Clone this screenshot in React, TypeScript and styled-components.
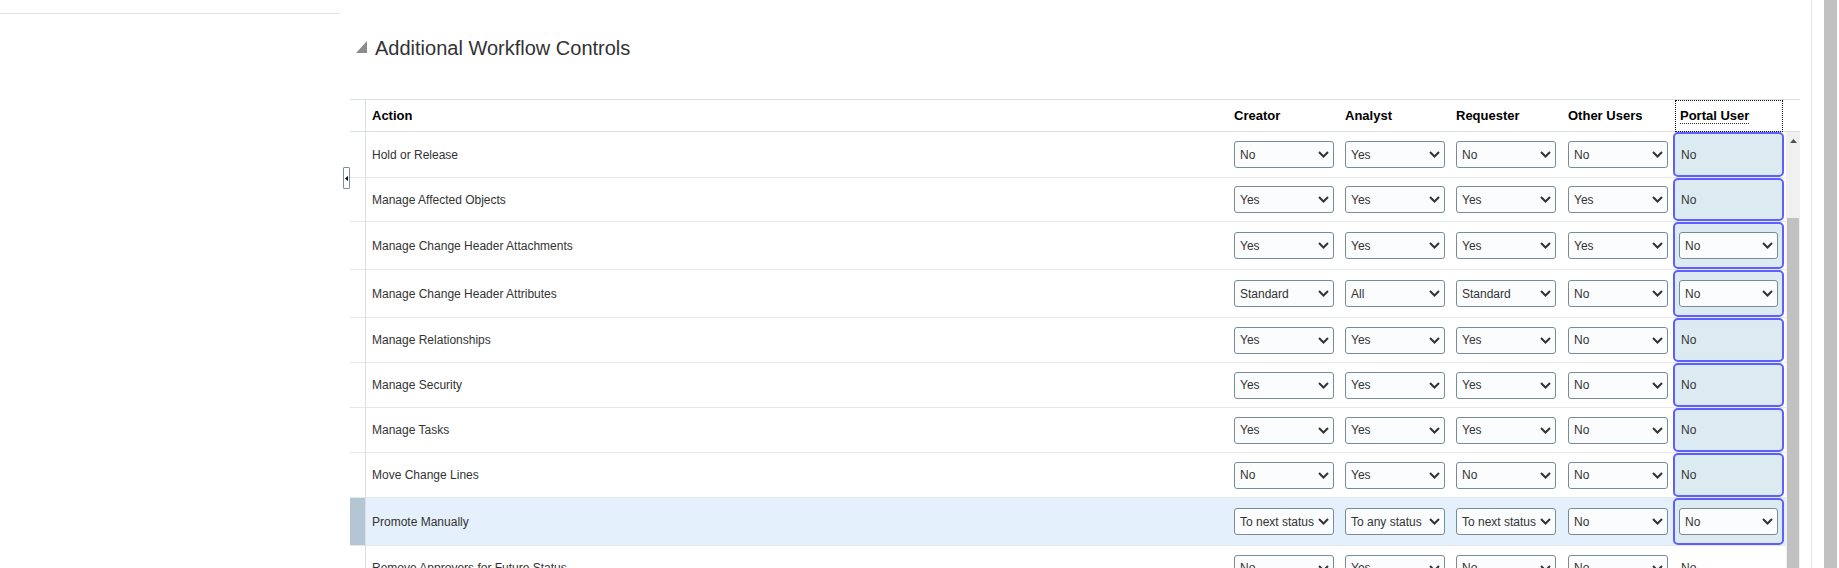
import React from "react";
import styled, { createGlobalStyle } from "styled-components";

const GlobalStyle = createGlobalStyle`
  html, body { margin: 0; padding: 0; background: #fff; }
  body { font-family: "Liberation Sans", Arial, sans-serif; }
  * { box-sizing: border-box; }
`;

const COLS = "16px 862px 111px 111px 112px 111px 113px";

const Page = styled.div`
  display: flex;
  width: 1839px;
  height: 568px;
  overflow: hidden;
  background: #fff;
`;

const LeftPanel = styled.aside`
  width: 340px;
  flex: none;
`;

const LeftHeader = styled.div`
  height: 14px;
  border-bottom: 1px solid #dde3e9;
`;

const Splitter = styled.div`
  width: 10px;
  flex: none;
  position: relative;
`;

const Handle = styled.button`
  position: absolute;
  top: 167px;
  left: 3px;
  width: 7px;
  height: 22px;
  padding: 0;
  border: 1px solid #7690a8;
  border-radius: 1px;
  background: #fff;
  display: flex;
  align-items: center;
  justify-content: center;
  cursor: pointer;
`;

const Main = styled.main`
  width: 1450px;
  flex: none;
  display: flex;
  flex-direction: column;
`;

const TitleRow = styled.div`
  margin-top: 37px;
  height: 23px;
  display: flex;
  align-items: flex-start;
  gap: 8px;
  padding-left: 6px;
`;

const Disclosure = styled.svg`
  margin-top: 4px;
  flex: none;
`;

const TitleText = styled.h2`
  margin: 0;
  font-size: 20px;
  line-height: 23px;
  font-weight: normal;
  color: #333;
  white-space: nowrap;
`;

const Table = styled.div`
  margin-top: 39px;
  border-top: 1px solid #d8dfe5;
  display: flex;
  flex-direction: column;
`;

const HeaderRow = styled.div`
  display: grid;
  grid-template-columns: ${COLS} 14px;
  height: 32px;
  border-bottom: 1px solid #d8dfe5;
`;

const HeadCell = styled.div<{ $rowHead?: boolean }>`
  display: flex;
  align-items: center;
  padding-left: 6px;
  font-size: 13px;
  font-weight: bold;
  color: #000;
  white-space: nowrap;
  ${(p) => (p.$rowHead ? "border-right: 1px solid #d8dfe5; padding-left: 0;" : "")}
`;

const FocusHead = styled.div`
  display: flex;
  align-items: center;
  margin: 0 3px -1px 2px;
  padding-left: 4px;
  border: 1px dotted #111;
  font-size: 13px;
  font-weight: bold;
  color: #000;
  white-space: nowrap;
`;

const Abbr = styled.span`
  display: inline-block;
  line-height: 15px;
  border-bottom: 1px dotted #333;
`;

const Body = styled.div`
  display: flex;
  height: 436px;
  overflow: hidden;
`;

const Rows = styled.div`
  width: 1436px;
  flex: none;
  display: flex;
  flex-direction: column;
`;

const Row = styled.div<{ $selected?: boolean }>`
  display: grid;
  grid-template-columns: ${COLS};
  flex: none;
  border-bottom: 1px solid #e3e7eb;
  background: ${(p) => (p.$selected ? "#e4f0fc" : "transparent")};
`;

const RowHead = styled.div<{ $selected?: boolean }>`
  border-right: 1px solid #d8dfe5;
  background: ${(p) => (p.$selected ? "#b4c6d4" : "transparent")};
`;

const ActionCell = styled.div`
  display: flex;
  align-items: center;
  padding-left: 6px;
  font-size: 12px;
  color: #333;
  white-space: nowrap;
`;

const ValueCell = styled.div`
  display: flex;
  align-items: center;
  padding-left: 6px;
`;

const PortalCell = styled.div<{ $boxed: boolean; $withSelect: boolean }>`
  display: flex;
  align-items: center;
  margin-right: 2px;
  font-size: 12px;
  color: #333;
  ${(p) =>
    p.$boxed
      ? `border: 2px solid #5f5fff; border-radius: 5px; background: #dcebf2; padding-left: ${
          p.$withSelect ? 4 : 6
        }px;`
      : "padding-left: 8px;"}
`;

const SelectBox = styled.div<{ $width: number }>`
  width: ${(p) => p.$width}px;
  height: 27px;
  display: flex;
  align-items: center;
  justify-content: space-between;
  padding: 0 4px 0 5px;
  border: 1px solid #7a8b98;
  border-radius: 3px;
  background: #fbfcfd;
  font-size: 12px;
  color: #333;
  white-space: nowrap;
  overflow: hidden;
  cursor: default;
`;

const Chevron = styled.svg`
  flex: none;
`;

const ScrollTrack = styled.div`
  width: 14px;
  flex: none;
  background: #f0f0f0;
  display: flex;
  flex-direction: column;
  align-items: center;
  padding-top: 7px;
`;

const ScrollThumb = styled.div`
  margin-top: 75px;
  width: 12px;
  flex: 1;
  background: #c1c1c1;
`;

const RightGutter = styled.div`
  width: 39px;
  flex: none;
  display: flex;
  padding-left: 11px;
  gap: 12px;
`;

const GutterLine = styled.div`
  width: 1px;
  background: #e6e6e6;
`;

const GutterBar = styled.div`
  width: 13px;
  background: #c1c1c1;
`;

type Rec = {
  action: string;
  values: [string, string, string, string];
  portal: string;
  portalSelect?: boolean;
  boxed?: boolean;
  selected?: boolean;
  h: number;
};

const rows: Rec[] = [
  { action: "Hold or Release", values: ["No", "Yes", "No", "No"], portal: "No", boxed: true, h: 46 },
  { action: "Manage Affected Objects", values: ["Yes", "Yes", "Yes", "Yes"], portal: "No", boxed: true, h: 44 },
  { action: "Manage Change Header Attachments", values: ["Yes", "Yes", "Yes", "Yes"], portal: "No", portalSelect: true, boxed: true, h: 48 },
  { action: "Manage Change Header Attributes", values: ["Standard", "All", "Standard", "No"], portal: "No", portalSelect: true, boxed: true, h: 48 },
  { action: "Manage Relationships", values: ["Yes", "Yes", "Yes", "No"], portal: "No", boxed: true, h: 45 },
  { action: "Manage Security", values: ["Yes", "Yes", "Yes", "No"], portal: "No", boxed: true, h: 45 },
  { action: "Manage Tasks", values: ["Yes", "Yes", "Yes", "No"], portal: "No", boxed: true, h: 45 },
  { action: "Move Change Lines", values: ["No", "Yes", "No", "No"], portal: "No", boxed: true, h: 45 },
  { action: "Promote Manually", values: ["To next status", "To any status", "To next status", "No"], portal: "No", portalSelect: true, boxed: true, selected: true, h: 48 },
  { action: "Remove Approvers for Future Status", values: ["No", "Yes", "No", "No"], portal: "No", boxed: false, h: 45 },
];

const Select: React.FC<{ value: string; width?: number }> = ({ value, width = 100 }) => (
  <SelectBox $width={width} role="combobox" aria-expanded={false}>
    <span>{value}</span>
    <Chevron width="11" height="7" viewBox="0 0 11 7">
      <polyline points="1,1 5.5,5.5 10,1" fill="none" stroke="#333" strokeWidth="2" />
    </Chevron>
  </SelectBox>
);

export default function App() {
  return (
    <>
      <GlobalStyle />
      <Page>
        <LeftPanel>
          <LeftHeader />
        </LeftPanel>
        <Splitter>
          <Handle aria-label="Collapse">
            <svg width="3" height="5" viewBox="0 0 3 5">
              <polygon points="3,0 3,5 0,2.5" fill="#000" />
            </svg>
          </Handle>
        </Splitter>
        <Main>
          <TitleRow>
            <Disclosure width="11" height="12" viewBox="0 0 11 12">
              <polygon points="11,0 11,12 0,12" fill="#8c8c8c" />
            </Disclosure>
            <TitleText>Additional Workflow Controls</TitleText>
          </TitleRow>
          <Table>
            <HeaderRow>
              <HeadCell $rowHead />
              <HeadCell>Action</HeadCell>
              <HeadCell>Creator</HeadCell>
              <HeadCell>Analyst</HeadCell>
              <HeadCell>Requester</HeadCell>
              <HeadCell>Other Users</HeadCell>
              <FocusHead>
                <Abbr>Portal User</Abbr>
              </FocusHead>
              <div />
            </HeaderRow>
            <Body>
              <Rows>
                {rows.map((r) => (
                  <Row key={r.action} $selected={r.selected} style={{ height: r.h }}>
                    <RowHead $selected={r.selected} />
                    <ActionCell>{r.action}</ActionCell>
                    {r.values.map((v, i) => (
                      <ValueCell key={i}>
                        <Select value={v} />
                      </ValueCell>
                    ))}
                    <PortalCell $boxed={!!r.boxed} $withSelect={!!r.portalSelect}>
                      {r.portalSelect ? <Select value={r.portal} width={99} /> : r.portal}
                    </PortalCell>
                  </Row>
                ))}
              </Rows>
              <ScrollTrack>
                <svg width="7" height="4" viewBox="0 0 7 4">
                  <polygon points="3.5,0 7,4 0,4" fill="#505050" />
                </svg>
                <ScrollThumb />
              </ScrollTrack>
            </Body>
          </Table>
        </Main>
        <RightGutter>
          <GutterLine />
          <GutterBar />
        </RightGutter>
      </Page>
    </>
  );
}
